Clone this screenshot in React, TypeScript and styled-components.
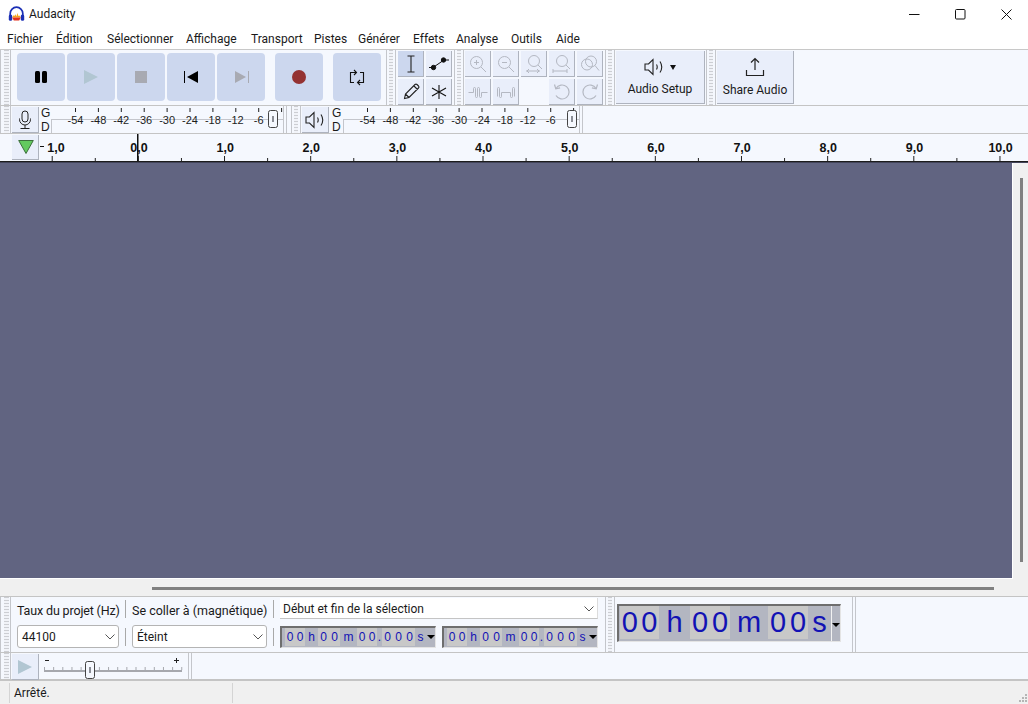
import styled, { createGlobalStyle } from "styled-components";

const MENUS = [
  { label: "Fichier", width: 49 },
  { label: "Édition", width: 51 },
  { label: "Sélectionner", width: 79 },
  { label: "Affichage", width: 65 },
  { label: "Transport", width: 63 },
  { label: "Pistes", width: 44 },
  { label: "Générer", width: 55 },
  { label: "Effets", width: 43 },
  { label: "Analyse", width: 55 },
  { label: "Outils", width: 45 },
  { label: "Aide", width: 40 },
];
const METER_MARKS = ["-54", "-48", "-42", "-36", "-30", "-24", "-18", "-12", "-6"];
const RULER_MARKS = ["0,0", "1,0", "2,0", "3,0", "4,0", "5,0", "6,0", "7,0", "8,0", "9,0", "10,0"];

const SMALL_TIME = [
  { text: "00", width: 20, light: true }, { text: "h", width: 13 },
  { text: "00", width: 22, light: true }, { text: "m", width: 17 },
  { text: "00", width: 20, light: true }, { text: ".", width: 5 },
  { text: "000", width: 33, light: true }, { text: "s", width: 11 },
];
const BIG_TIME = [
  { text: "00", width: 39, light: true }, { text: "h", width: 31 },
  { text: "00", width: 40, light: true }, { text: "m", width: 38 },
  { text: "00", width: 40, light: true }, { text: "s", width: 23 },
];

const GlobalStyle = createGlobalStyle`
  html, body {
    margin: 0;
    padding: 0;
    background: #f0f0f0;
  }
  * {
    box-sizing: border-box;
  }
`;

const Logo = () => (
  <svg width="17" height="16" viewBox="0 0 17 16">
    <path d="M2.2 10V7.5a6.3 6.3 0 0 1 12.6 0V10" fill="none" stroke="#1b2fb5" strokeWidth="1.7" />
    <rect x="0.8" y="8.6" width="3.4" height="6.2" rx="1.5" fill="#1b2fb5" />
    <rect x="12.8" y="8.6" width="3.4" height="6.2" rx="1.5" fill="#1b2fb5" />
    <path d="M4.2 11.5h8.6l-1.4-2-1 .6-1-3.2-1 3.6-1-2.2-1 1.6-1-.6z" fill="#f7a51c" />
    <path d="M4.2 11.5h8.6l-1.6 3H5.8z" fill="#e3311d" />
  </svg>
);

const MicIcon = () => (
  <svg width="18" height="20" viewBox="0 0 18 20" fill="none" stroke="#222" strokeWidth="1">
    <rect x="6" y="1" width="6" height="11" rx="3" />
    <path d="M3.5 8.5v1a5.5 5.5 0 0 0 11 0v-1M9 15v3M4.5 18.5h9" />
  </svg>
);

const SpeakerIcon = () => (
  <svg width="20" height="18" viewBox="0 0 20 18" fill="none" stroke="#222" strokeWidth="1.1">
    <path d="M1 6h3.500l4.500-4.500v15L4.500 12H1z" />
    <path d="M12.500 6.500c1 1.700 1 3.300 0 5M16 3.500c2.300 3.600 2.300 7.400 0 11" />
  </svg>
);

const transportIcons = {
  pause: (
    <svg width="14" height="14" viewBox="0 0 14 14">
      <rect x="1" y="1" width="5" height="12" rx="1.500" fill="#000" />
      <rect x="8" y="1" width="5" height="12" rx="1.500" fill="#000" />
    </svg>
  ),
  play: (
    <svg width="16" height="16" viewBox="0 0 16 16">
      <path d="M1 1l14 7-14 7z" fill="#b1c6d2" />
    </svg>
  ),
  stop: (
    <svg width="12" height="12" viewBox="0 0 12 12">
      <rect width="12" height="12" fill="#a8aab2" />
    </svg>
  ),
  start: (
    <svg width="15" height="14" viewBox="0 0 15 14">
      <rect x="0" y="1" width="1" height="12" fill="#000" />
      <path d="M3 7l11-6v12z" fill="#000" />
    </svg>
  ),
  end: (
    <svg width="15" height="14" viewBox="0 0 15 14">
      <path d="M1 1l11 6-11 6z" fill="#a8aab2" />
      <rect x="14" y="1" width="1" height="12" fill="#a8aab2" />
    </svg>
  ),
  record: (
    <svg width="14" height="14" viewBox="0 0 14 14">
      <circle cx="7" cy="7" r="7" fill="#943232" />
    </svg>
  ),
  loop: (
    <svg width="16" height="17" viewBox="0 0 16 17" fill="none" stroke="#111" strokeWidth="1.100">
      <path d="M7 3.500H1.500v10H5M9 13.500h5.500v-10H11" />
      <path d="M5 1l2.500 2.500L5 6M11 11l-2.500 2.500L11 16" />
    </svg>
  ),
};

const toolIcons = {
  select: (
    <svg width="12" height="18" viewBox="0 0 12 18" fill="none" stroke="#222" strokeWidth="1.100">
      <path d="M2.500 1h7M6 1v16M2.500 17h7" />
    </svg>
  ),
  envelope: (
    <svg width="22" height="16" viewBox="0 0 22 16" fill="#111" stroke="#111">
      <path d="M5 11.500L16 4" />
      <path d="M16 4h5M1 11.500h4" />
      <circle cx="5.500" cy="11.500" r="2.200" />
      <circle cx="15.500" cy="4" r="2.200" />
    </svg>
  ),
  pencil: (
    <svg width="17" height="17" viewBox="0 0 17 17" fill="none" stroke="#222" strokeWidth="1.100">
      <path d="M1.500 15.500l1-4.500L12 1.500a1.500 1.500 0 0 1 2 0l1.500 1.500a1.500 1.500 0 0 1 0 2L6 14.500zM2.500 11L6 14.500M11 3l3.500 3.500" />
    </svg>
  ),
  multi: (
    <svg width="16" height="16" viewBox="0 0 16 16" fill="none" stroke="#111" strokeWidth="1.100">
      <path d="M8 1v14M1 4l14 8M15 4L1 12" />
    </svg>
  ),
};

const LENS = "#b4b8c2";

const zoomIcons = {
  zoomIn: (
    <svg width="18" height="18" viewBox="0 0 18 18" fill="none" stroke={LENS}>
      <circle cx="7.500" cy="7.500" r="6" />
      <path d="M12 12l5 5M5 7.500h5M7.500 5v5" />
    </svg>
  ),
  zoomOut: (
    <svg width="18" height="18" viewBox="0 0 18 18" fill="none" stroke={LENS}>
      <circle cx="7.500" cy="7.500" r="6" />
      <path d="M12 12l5 5M5 7.500h5" />
    </svg>
  ),
  fitSelection: (
    <svg width="20" height="20" viewBox="0 0 20 20" fill="none" stroke={LENS}>
      <circle cx="10" cy="7" r="5.500" />
      <path d="M14 11l4 4M2 17h14M5 15l-2 2 2 2M13 15l2 2-2 2" />
    </svg>
  ),
  fitProject: (
    <svg width="20" height="20" viewBox="0 0 20 20" fill="none" stroke={LENS}>
      <circle cx="10" cy="7" r="5.500" />
      <path d="M14 11l4 4M1 17h14M1 15v4M15 15v4" />
    </svg>
  ),
  toggle: (
    <svg width="20" height="18" viewBox="0 0 20 18" fill="none" stroke={LENS}>
      <circle cx="11" cy="6.500" r="5.500" />
      <circle cx="7" cy="9.500" r="5.500" />
      <path d="M15 10.500l4 5" />
    </svg>
  ),
  trim: (
    <svg width="20" height="14" viewBox="-0.500 -0.500 20 14" fill="none" stroke={LENS}>
      <path d="M0 7h5V3a1 1 0 0 1 2 0v8a1 1 0 0 0 2 0V3a1 1 0 0 1 2 0v8a1 1 0 0 0 2 0V7h6" />
    </svg>
  ),
  silence: (
    <svg width="20" height="14" viewBox="-0.500 -0.500 20 14" fill="none" stroke={LENS}>
      <path d="M1 11V3a1 1 0 0 1 2 0v8a1 1 0 0 0 2 0V7h9v4a1 1 0 0 0 2 0V3a1 1 0 0 1 2 0v8" />
    </svg>
  ),
  undo: (
    <svg width="18" height="17" viewBox="0 0 18 17" fill="none" stroke={LENS} strokeWidth="1.200">
      <path d="M3 5.500a7 7 0 1 1 0 7" />
      <path d="M1.500 1.500l1.300 4.300 4.300-1" />
    </svg>
  ),
  redo: (
    <svg width="18" height="17" viewBox="0 0 18 17" fill="none" stroke={LENS} strokeWidth="1.200">
      <path d="M15 5.500a7 7 0 1 0 0 7" />
      <path d="M16.500 1.500l-1.300 4.300-4.300-1" />
    </svg>
  ),
};

const SliderThumb = ({ x, y = 4 }: { x: number; y?: number }) => (
  <g>
    <rect x={x + 0.5} y={y + 0.5} width="9" height="17" rx="2" fill="#f5f8fe" stroke="#444" />
    <rect x={x + 4} y={y + 6} width="2" height="6" fill="#8b8e96" />
  </g>
);

const Meter = ({ width, thumb }: { width: number; thumb: number }) => (
  <svg width={width} height="27" viewBox={`0 0 ${width} 27`}>
    <path d={`M0 13.500H${width}M0.500 13V27`} stroke="#c4c6cc" fill="none" />
    {METER_MARKS.map((mark, i) => {
      const x = 24 + i * 22.9;
      return (
        <g key={mark}>
          <rect x={x} y="2" width="1" height="4" fill="#222" />
          <text x={x + 0.5} y="17.500" textAnchor="middle" fontSize="11" fill="#1c1c1c" fontFamily="Liberation Sans, sans-serif">
            {mark}
          </text>
        </g>
      );
    })}
    <rect x={24 + 9 * 22.9} y="2" width="1" height="4" fill="#222" />
    <SliderThumb x={thumb} />
  </svg>
);

const Ruler = () => (
  <svg width="1028" height="27" viewBox="0 0 1028 27">
    <rect x="137" y="0" width="1.500" height="27" fill="#111" />
    <rect x="40" y="12" width="4" height="1" fill="#111" />
    <text x="56" y="18" textAnchor="middle" fontSize="12.500" fontWeight="700" fill="#111" fontFamily="Liberation Sans, sans-serif">1,0</text>
    {Array.from({ length: 23 }, (_, i) => {
      const x = 51.7 + i * 43.08;
      return <rect key={i} x={x} y={i % 2 ? 24 : 22} width="1" height={i % 2 ? 3 : 5} fill="#222" />;
    })}
    {RULER_MARKS.map((mark, i) => (
      <text key={mark} x={139 + i * 86.16} y="18" textAnchor="middle" fontSize="12.500" fontWeight="700" fill="#111" fontFamily="Liberation Sans, sans-serif">
        {mark}
      </text>
    ))}
  </svg>
);

const SpeedSlider = () => (
  <svg width="140" height="24" viewBox="0 0 140 24">
    <path d="M1 5.500h4M130 5.500h5M132.500 3v5" stroke="#222" fill="none" />
    <rect x="0" y="15" width="138" height="2" fill="#a6a8ae" />
    {Array.from({ length: 16 }, (_, i) => (
      <rect key={i} x={i * 9.15} y="12" width="1" height="3" fill="#a6a8ae" />
    ))}
    <SliderThumb x={41} y={6} />
  </svg>
);

const Chevron = () => (
  <svg width="10" height="6" viewBox="0 0 10 6" fill="none" stroke="#555">
    <path d="M0.500 0.500L5 5l4.500-4.500" />
  </svg>
);

const TimeDisplay = ({ big, parts }: { big?: boolean; parts: { text: string; width: number; light?: boolean }[] }) => (
  <TimeBox $big={big}>
    {parts.map((part, i) => (
      <TimeCell key={i} $big={big} $light={part.light} $width={part.width}>
        {part.text.split("").map((ch, j) => (
          <span key={j}>{ch}</span>
        ))}
      </TimeCell>
    ))}
    <TimeArrow $big={big} />
  </TimeBox>
);

const App = () => {
  return (
    <Window>
      <GlobalStyle />
      <TitleBar>
        <Logo />
        <TitleText>Audacity</TitleText>
        <WindowControls>
          <svg width="11" height="11" viewBox="0 0 11 11"><path d="M0 5.500h10.500" stroke="#111" /></svg>
          <svg width="11" height="11" viewBox="0 0 11 11"><rect x="0.500" y="0.500" width="9.500" height="9.500" rx="1" fill="none" stroke="#111" /></svg>
          <svg width="11" height="11" viewBox="0 0 11 11"><path d="M0.500 0.500l10 10M10.500 0.500l-10 10" stroke="#111" /></svg>
        </WindowControls>
      </TitleBar>

      <MenuBar>
        {MENUS.map((menu) => (
          <MenuItem key={menu.label} $width={menu.width}>
            {menu.label}
          </MenuItem>
        ))}
      </MenuBar>

      <TopDock>
        <Grip $first />
        <TransportBar>
          <TransportButton>{transportIcons.pause}</TransportButton>
          <TransportButton>{transportIcons.play}</TransportButton>
          <TransportButton>{transportIcons.stop}</TransportButton>
          <TransportButton>{transportIcons.start}</TransportButton>
          <TransportButton>{transportIcons.end}</TransportButton>
          <TransportButton $spaced>{transportIcons.record}</TransportButton>
          <TransportButton $spaced>{transportIcons.loop}</TransportButton>
        </TransportBar>
        <Grip />
        <ToolGrid $columns={2} $left={2} $right={2}>
          <ToolButton $active>{toolIcons.select}</ToolButton>
          <ToolButton>{toolIcons.envelope}</ToolButton>
          <ToolButton>{toolIcons.pencil}</ToolButton>
          <ToolButton>{toolIcons.multi}</ToolButton>
        </ToolGrid>
        <Grip />
        <ToolGrid $columns={5} $left={1} $right={2}>
          <ToolButton>{zoomIcons.zoomIn}</ToolButton>
          <ToolButton>{zoomIcons.zoomOut}</ToolButton>
          <ToolButton>{zoomIcons.fitSelection}</ToolButton>
          <ToolButton>{zoomIcons.fitProject}</ToolButton>
          <ToolButton>{zoomIcons.toggle}</ToolButton>
          <ToolButton>{zoomIcons.trim}</ToolButton>
          <ToolButton>{zoomIcons.silence}</ToolButton>
          <ToolGap />
          <ToolButton>{zoomIcons.undo}</ToolButton>
          <ToolButton>{zoomIcons.redo}</ToolButton>
        </ToolGrid>
        <Grip />
        <LabelButton $width={89}>
          <SetupIcon>
            <SpeakerIcon />
            <DownMark />
          </SetupIcon>
          Audio Setup
        </LabelButton>
        <Grip />
        <LabelButton $width={77}>
          <svg width="20" height="20" viewBox="0 0 20 20" fill="none" stroke="#222" strokeWidth="1.200">
            <path d="M10 13V1.500M6 5.500l4-4 4 4M1.500 13v5.500h17V13" />
          </svg>
          Share Audio
        </LabelButton>
      </TopDock>

      <MeterRow>
        <Grip $first />
        <SmallButton>
          <MicIcon />
        </SmallButton>
        <Channels $width={10}>
          <span>G</span>
          <span>D</span>
        </Channels>
        <Meter width={232} thumb={217} />
        <MeterSeparator $after={4} />
        <Grip />
        <SmallButton>
          <SpeakerIcon />
        </SmallButton>
        <Channels $width={12} $indent={1}>
          <span>G</span>
          <span>D</span>
        </Channels>
        <Meter width={236} thumb={224} />
        <MeterSeparator />
      </MeterRow>

      <RulerRow>
        <RulerBody>
          <Ruler />
        </RulerBody>
        <PlayheadButton>
          <svg width="16" height="14" viewBox="0 0 16 14">
            <path d="M0.700 0.500h14.600L8 13.500z" fill="#63c95f" stroke="#3c6f3c" />
          </svg>
        </PlayheadButton>
      </RulerRow>

      <TrackArea>
        <TrackPanel />
        <VerticalScroll>
          <VerticalThumb />
        </VerticalScroll>
      </TrackArea>
      <HorizontalScroll>
        <HorizontalThumb />
      </HorizontalScroll>

      <SelectionBar>
        <Grip $first />
        <SelectionGrid>
          <FieldLabel $tight>Taux du projet (Hz)</FieldLabel>
          <FieldDivider />
          <FieldLabel>Se coller à (magnétique)</FieldLabel>
          <FieldDivider />
          <ModeSelect>
            Début et fin de la sélection
            <Chevron />
          </ModeSelect>
          <Combo>
            44100
            <Chevron />
          </Combo>
          <FieldDivider />
          <Combo>
            Éteint
            <Chevron />
          </Combo>
          <FieldDivider />
          <SmallTimes>
            <TimeDisplay parts={SMALL_TIME} />
            <TimeDisplay parts={SMALL_TIME} />
          </SmallTimes>
        </SelectionGrid>
        <Grip />
        <BigTimeWrap>
          <TimeDisplay big parts={BIG_TIME} />
        </BigTimeWrap>
        <MeterSeparator />
      </SelectionBar>

      <SpeedRow>
        <Grip $first />
        <SmallButton>{transportIcons.play}</SmallButton>
        <SpeedWrap>
          <SpeedSlider />
        </SpeedWrap>
        <MeterSeparator />
      </SpeedRow>

      <StatusBar>
        <StatusCell $width={223}>Arrêté.</StatusCell>
        <StatusCell $width={618} />
        <ResizeDots>
          <svg width="10" height="10" viewBox="0 0 10 10" fill="#b5b5b5">
            <rect x="7" y="1" width="2" height="2" />
            <rect x="4" y="4" width="2" height="2" />
            <rect x="7" y="4" width="2" height="2" />
            <rect x="1" y="7" width="2" height="2" />
            <rect x="4" y="7" width="2" height="2" />
            <rect x="7" y="7" width="2" height="2" />
          </svg>
        </ResizeDots>
      </StatusBar>
    </Window>
  );
};

const Window = styled.div`
  width: 1028px;
  height: 704px;
  display: flex;
  flex-direction: column;
  overflow: hidden;
  background: #f0f0f0;
  font-family: "Roboto", "Liberation Sans", sans-serif;
  font-size: 12px;
  color: #1a1a1a;
`;

const TitleBar = styled.div`
  height: 29px;
  flex: none;
  display: flex;
  align-items: center;
  padding: 0 16px 1px 8px;
  background: #fff;
`;

const TitleText = styled.span`
  margin-left: 4px;
`;

const WindowControls = styled.div`
  margin-left: auto;
  display: flex;
  align-items: center;
  gap: 35px;
`;

const MenuBar = styled.div`
  height: 20px;
  flex: none;
  display: flex;
  align-items: center;
  padding: 0 0 1px 7px;
  background: #fff;
`;

const MenuItem = styled.span<{ $width: number }>`
  width: ${(p) => p.$width}px;
  flex: none;
  white-space: nowrap;
`;

const Grip = styled.div<{ $first?: boolean }>`
  flex: none;
  align-self: stretch;
  width: ${(p) => (p.$first ? 11 : 10)}px;
  padding: 0 ${(p) => (p.$first ? 1 : 2)}px 0 ${(p) => (p.$first ? 3 : 2)}px;
  border-left: 1px solid #c4c6cb;
  border-right: 1px solid #c4c6cb;
  background: repeating-linear-gradient(to bottom, #ccced3 0 1px, #f1f3f8 1px 3px) content-box;
`;

const TopDock = styled.div`
  height: 57px;
  flex: none;
  display: flex;
  border-top: 1px solid #c8c8c8;
  border-bottom: 1px solid #c4c4c4;
  background: #f5f8fe;
`;

const TransportBar = styled.div`
  display: flex;
  gap: 2px;
  padding: 3px 5px 3px 6px;
`;

const TransportButton = styled.div<{ $spaced?: boolean }>`
  width: 48px;
  height: 48px;
  display: flex;
  align-items: center;
  justify-content: center;
  margin-left: ${(p) => (p.$spaced ? 8 : 0)}px;
  border-radius: 4px;
  background: #ccd7ee;
`;

const ToolGrid = styled.div<{ $columns: number; $left: number; $right: number }>`
  display: grid;
  grid-template-columns: repeat(${(p) => p.$columns}, 26px);
  grid-auto-rows: 26px;
  gap: 2px;
  padding: 1px ${(p) => p.$right}px 0 ${(p) => p.$left}px;
`;

const ToolButton = styled.div<{ $active?: boolean }>`
  display: flex;
  align-items: center;
  justify-content: center;
  padding-left: 1px;
  border-right: 1px solid #aeb3be;
  border-bottom: 1px solid #aeb3be;
  background: ${(p) => (p.$active ? "#ccd7ee" : "#e9eefa")};
`;

const ToolGap = styled.div``;

const LabelButton = styled.div<{ $width: number }>`
  width: ${(p) => p.$width}px;
  margin: 1px;
  display: flex;
  flex-direction: column;
  align-items: center;
  justify-content: center;
  gap: 6px;
  border-right: 1px solid #aeb3be;
  border-bottom: 1px solid #aeb3be;
  background: #e9eefa;
`;

const SetupIcon = styled.div`
  display: flex;
  align-items: center;
  gap: 6px;
`;

const DownMark = styled.span`
  width: 0;
  height: 0;
  border-left: 3.5px solid transparent;
  border-right: 3.5px solid transparent;
  border-top: 5px solid #111;
`;

const MeterRow = styled.div`
  height: 28px;
  flex: none;
  display: flex;
  align-items: stretch;
  border-bottom: 1px solid #c4c4c4;
  background: #f5f8fe;
`;

const SmallButton = styled.div`
  width: 27px;
  height: 26px;
  flex: none;
  margin: 1px 1px 0 1px;
  display: flex;
  align-items: center;
  justify-content: center;
  border-right: 1px solid #aeb3be;
  border-bottom: 1px solid #aeb3be;
  background: #e9eefa;
`;

const Channels = styled.div<{ $width: number; $indent?: number }>`
  width: ${(p) => p.$width}px;
  flex: none;
  margin-left: 1px;
  padding-left: ${(p) => p.$indent ?? 0}px;
  display: flex;
  flex-direction: column;
  justify-content: center;
  font-family: "Liberation Sans", sans-serif;
  font-size: 12px;
  line-height: 14px;
`;

const MeterSeparator = styled.div<{ $after?: number }>`
  width: 4px;
  flex: none;
  margin-right: ${(p) => p.$after ?? 3}px;
  border-left: 1px solid #c4c6cb;
  border-right: 1px solid #c4c6cb;
`;

const RulerRow = styled.div`
  height: 28px;
  flex: none;
  position: relative;
  border-bottom: 1px solid #1c1c1c;
  background: #f5f8fe;
`;

const RulerBody = styled.div`
  height: 27px;
`;

const PlayheadButton = styled.div`
  position: absolute;
  left: 12px;
  top: 1px;
  width: 27px;
  height: 25px;
  display: flex;
  align-items: center;
  justify-content: center;
  padding-left: 2px;
  border-right: 1px solid #aeb3be;
  border-bottom: 1px solid #aeb3be;
  background: #e9eefa;
`;

const TrackArea = styled.div`
  flex: 1;
  min-height: 0;
  display: flex;
  border-top: 1px solid #42445a;
`;

const TrackPanel = styled.div`
  flex: 1;
  background: #616481;
  border-right: 1px solid #fff;
  border-bottom: 1px solid #fff;
`;

const VerticalScroll = styled.div`
  width: 15px;
  flex: none;
  padding: 15px 0 17px 7px;
`;

const VerticalThumb = styled.div`
  width: 3px;
  height: 100%;
  background: #808080;
`;

const HorizontalScroll = styled.div`
  height: 17px;
  flex: none;
  padding: 8px 34px 0 152px;
`;

const HorizontalThumb = styled.div`
  height: 3px;
  background: #808080;
`;

const SelectionBar = styled.div`
  height: 57px;
  flex: none;
  display: flex;
  border-top: 1px solid #c4c4c4;
  border-bottom: 1px solid #c4c4c4;
  background: #f5f8fe;
`;

const SelectionGrid = styled.div`
  width: 594px;
  flex: none;
  display: grid;
  grid-template-columns: 102px 1px 135px 1px 318px;
  grid-template-rows: 21px 23px;
  column-gap: 6px;
  row-gap: 6px;
  padding: 1px 0 0 6px;
  align-items: center;
`;

const FieldLabel = styled.span<{ $tight?: boolean }>`
  padding-top: 3px;
  white-space: nowrap;
  font-size: 12.5px;
  letter-spacing: ${(p) => (p.$tight ? "-0.15px" : "0")};
`;

const FieldDivider = styled.div`
  width: 1px;
  height: 18px;
  background: #a8a8a8;
`;

const ModeSelect = styled.div`
  height: 21px;
  display: flex;
  align-items: center;
  justify-content: space-between;
  padding: 1px 3px 0 3px;
  background: #fff;
  border-bottom: 1px solid #c4c4c4;
  border-right: 1px solid #dcdcdc;
`;

const Combo = styled.div`
  height: 23px;
  display: flex;
  align-items: center;
  justify-content: space-between;
  padding: 0 3px 0 4px;
  background: #fff;
  border: 1px solid #b4b4b4;
  border-radius: 3px;
`;

const SmallTimes = styled.div`
  display: flex;
  gap: 6px;
`;

const TimeBox = styled.div<{ $big?: boolean }>`
  display: flex;
  width: ${(p) => (p.$big ? 224 : 156)}px;
  height: ${(p) => (p.$big ? 38 : 22)}px;
  padding-left: ${(p) => (p.$big ? 1 : 3)}px;
  border-top: 2px solid #6e6e6e;
  border-left: 2px solid #6e6e6e;
  border-right: 1px solid #e4e4e4;
  border-bottom: 1px solid #e4e4e4;
  background: #b3b6c1;
  color: #1212b4;
  font-family: "Liberation Sans", sans-serif;
  font-size: ${(p) => (p.$big ? 29 : 12)}px;
`;

const TimeCell = styled.div<{ $big?: boolean; $light?: boolean; $width: number }>`
  width: ${(p) => p.$width}px;
  flex: none;
  display: flex;
  align-items: center;
  justify-content: space-around;
  background: ${(p) => (p.$light ? "#c8c8c8" : "transparent")};
  margin-bottom: ${(p) => (p.$big ? 2 : 1)}px;
`;

const TimeArrow = styled.div<{ $big?: boolean }>`
  flex: 1;
  position: relative;
  border-left: 1px solid ${(p) => (p.$big ? "#f2f2f2" : "#b3b6c1")};

  &::after {
    content: "";
    position: absolute;
    left: 0;
    top: ${(p) => (p.$big ? 17 : 7)}px;
    border-left: 4px solid transparent;
    border-right: 4px solid transparent;
    border-top: 4px solid #000;
  }
`;

const BigTimeWrap = styled.div`
  width: 237px;
  flex: none;
  padding: 7px 0 0 2px;
`;

const SpeedRow = styled.div`
  height: 28px;
  flex: none;
  display: flex;
  border-bottom: 2px solid #c4c4c4;
  background: #f5f8fe;
`;

const SpeedWrap = styled.div`
  width: 148px;
  flex: none;
  padding: 2px 0 0 4px;
`;

const StatusBar = styled.div`
  height: 23px;
  flex: none;
  position: relative;
  display: flex;
  padding: 2px 0 0 9px;
`;

const StatusCell = styled.div<{ $width: number }>`
  width: ${(p) => p.$width}px;
  flex: none;
  display: flex;
  align-items: center;
  padding-left: 4px;
  border-left: 1px solid #d4d4d4;
  margin-bottom: 1px;
`;

const ResizeDots = styled.div`
  position: absolute;
  right: 0;
  bottom: -2px;
`;

export default App;
